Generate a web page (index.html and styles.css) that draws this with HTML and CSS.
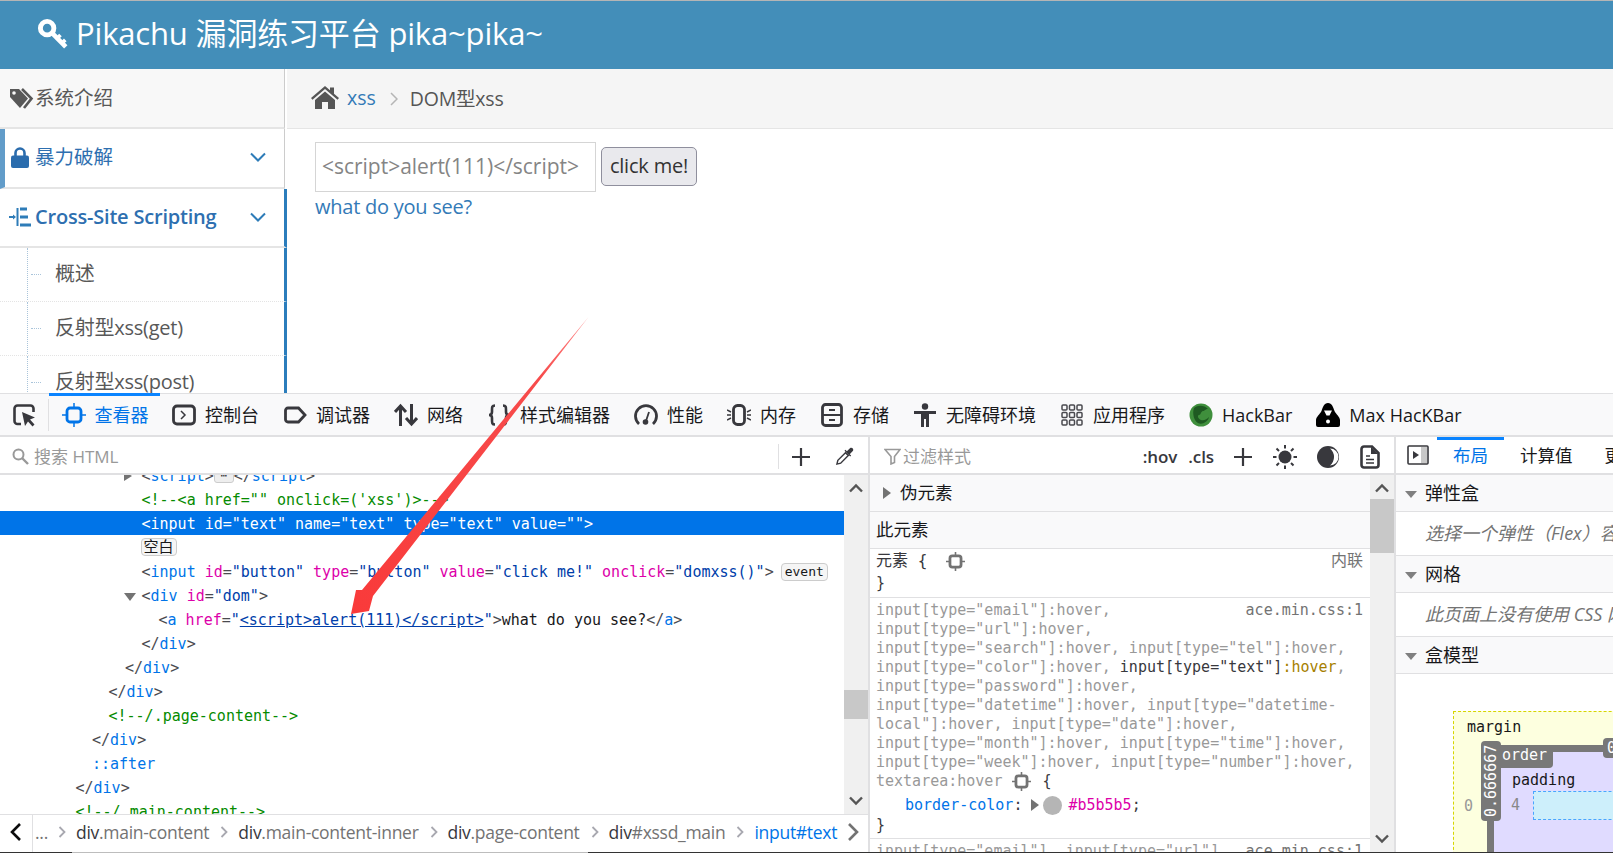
FILE: index.html
```html
<!DOCTYPE html>
<html lang="zh">
<head>
<meta charset="utf-8">
<title>Pikachu</title>
<link rel="stylesheet" href="styles.css">
</head>
<body>
<div class="page">
  <div class="site">
    <header class="navbar">
      <svg class="key" viewBox="0 0 30 30"><circle cx="9.5" cy="9.5" r="6.3" fill="none" stroke="#fff" stroke-width="4.6"/><path d="M14 14l13 13" stroke="#fff" stroke-width="4.4" fill="none"/><path d="M19 19l3-3M23.500 23.500l3-3" stroke="#fff" stroke-width="3.400" fill="none"/></svg>
      <span class="brand">Pikachu 漏洞练习平台 pika~pika~</span>
    </header>
    <div class="site-main">
      <nav class="sidebar">
        <div class="nav-item nav-first">
          <svg class="tags" viewBox="0 0 25 21"><path d="M0 1h9l9 9.500-8 9.500L0 9z" fill="#585858"/><circle cx="4" cy="5" r="1.800" fill="#f8f8f8"/><path d="M12 1l9.500 9.500L14 20" fill="none" stroke="#585858" stroke-width="2.600"/></svg>
          <span class="nav-text grey">系统介绍</span>
        </div>
        <div class="nav-item nav-second">
          <svg class="lock" viewBox="0 0 18 21"><path d="M4.500 9V6a4.500 4.500 0 0 1 9 0v3" fill="none" stroke="#2a6cad" stroke-width="2.600"/><rect x="0" y="8.500" width="18" height="12.500" rx="2" fill="#2a6cad"/></svg>
          <span class="nav-text blue">暴力破解</span>
          <svg class="chev" viewBox="0 0 16 10"><path d="M1 1.500l7 7 7-7" fill="none" stroke="#2e7cb8" stroke-width="2"/></svg>
        </div>
        <div class="nav-item nav-third">
          <svg class="tree" viewBox="0 0 22 20"><path d="M0 10h5" stroke="#2e7cb8" stroke-width="2"/><path d="M4 7.500l3 2.500-3 2.500z" fill="#2e7cb8"/><path d="M8.500 1v18" stroke="#2e7cb8" stroke-width="2"/><path d="M11 2h7M11 10h8M11 18h11" stroke="#2e7cb8" stroke-width="3"/></svg>
          <span class="nav-text blue tight">Cross-Site Scripting</span>
          <svg class="chev" viewBox="0 0 16 10"><path d="M1 1.500l7 7 7-7" fill="none" stroke="#2e7cb8" stroke-width="2"/></svg>
        </div>
        <div class="sub-item"><div class="sub-inner"><span class="dash"></span><span class="sub-text">概述</span></div></div>
        <div class="sub-item"><div class="sub-inner"><span class="dash"></span><span class="sub-text">反射型xss(get)</span></div></div>
        <div class="sub-item"><div class="sub-inner"><span class="dash"></span><span class="sub-text">反射型xss(post)</span></div></div>
      </nav>
      <main class="content">
        <div class="crumbs">
          <svg class="home" viewBox="0 0 28 23"><path d="M0 12L14 0l5 4.300V1.500h4v6.300L28 12l-1.500 1.700L14 3 1.500 13.700z" fill="#555"/><path d="M4 14L14 5.500 24 14v9h-7v-7h-6v7H4z" fill="#555"/></svg>
          <span class="crumb-link">xss</span>
          <svg class="crumb-sep" viewBox="0 0 8 14"><path d="M1 1l6 6-6 6" fill="none" stroke="#b5b5b5" stroke-width="1.500"/></svg>
          <span class="crumb-now">DOM型xss</span>
        </div>
        <div class="page-body">
          <div class="form-row">
            <div class="fake-input">&lt;script&gt;alert(111)&lt;/script&gt;</div>
            <div class="fake-button">click me!</div>
          </div>
          <div class="see">what do you see?</div>
        </div>
      </main>
    </div>
  </div>

  <section class="devtools">
    <div class="toolbar">
      <div class="picker">
        <svg class="ti" viewBox="0 0 24 24"><path d="M9 21H5.500A3 3 0 0 1 2.500 18V5.500a3 3 0 0 1 3-3h13a3 3 0 0 1 3 3V9" fill="none" stroke="#38383d" stroke-width="2.600"/><path d="M10 9l13 5.500-5 2 4.500 5-2 2-4.500-5-3 4.500z" fill="#38383d"/></svg>
      </div>
      <div class="tab tab-active">
        <svg class="ti" viewBox="0 0 24 24"><rect x="5" y="5" width="14" height="14" rx="3" fill="none" stroke="#0074e8" stroke-width="2.800"/><path d="M12 0v5M12 19v5M0 12h5M19 12h5" stroke="#0074e8" stroke-width="1.500"/></svg>
        <span>查看器</span>
      </div>
      <div class="tab">
        <svg class="ti" viewBox="0 0 24 24"><rect x="1.500" y="3" width="21" height="18" rx="3.500" fill="none" stroke="#38383d" stroke-width="2.800"/><path d="M9 8l4 4-4 4" fill="none" stroke="#38383d" stroke-width="1.500"/></svg>
        <span>控制台</span>
      </div>
      <div class="tab">
        <svg class="ti" viewBox="0 0 24 24"><path d="M5 5h10.500l6.500 7-6.500 7H5a2.500 2.500 0 0 1-2.500-2.500v-9A2.500 2.500 0 0 1 5 5z" fill="none" stroke="#38383d" stroke-width="2.800"/></svg>
        <span>调试器</span>
      </div>
      <div class="tab">
        <svg class="ti" viewBox="0 0 24 24"><path d="M6.500 23V3M1 9l5.500-6L12 9M17.500 1v20M12 15l5.500 6 5.500-6" fill="none" stroke="#38383d" stroke-width="3"/></svg>
        <span>网络</span>
      </div>
      <div class="tab">
        <svg class="ti" viewBox="0 0 24 24"><path d="M8 2.500C5 2.500 5 4 5 7v2c0 2-1 3-3 3 2 0 3 1 3 3v2c0 3 0 4.500 3 4.500M16 2.500c3 0 3 1.500 3 4.500v2c0 2 1 3 3 3-2 0-3 1-3 3v2c0 3 0 4.500-3 4.500" fill="none" stroke="#38383d" stroke-width="2.600"/></svg>
        <span>样式编辑器</span>
      </div>
      <div class="tab">
        <svg class="ti" viewBox="0 0 24 24"><path d="M5 21A10.500 10.500 0 1 1 19 21" fill="none" stroke="#38383d" stroke-width="2.800"/><circle cx="11.500" cy="19" r="2.800" fill="#38383d"/><path d="M12 18l3-9" stroke="#38383d" stroke-width="1.800"/></svg>
        <span>性能</span>
      </div>
      <div class="tab">
        <svg class="ti" viewBox="0 0 24 24"><rect x="6.500" y="2.500" width="11" height="19" rx="4" fill="none" stroke="#38383d" stroke-width="2.800"/><path d="M0 7l4 2M0 12h4M0 17l4-2M24 7l-4 2M24 12h-4M24 17l-4-2" stroke="#38383d" stroke-width="1.500"/></svg>
        <span>内存</span>
      </div>
      <div class="tab">
        <svg class="ti" viewBox="0 0 24 24"><rect x="2.500" y="1.500" width="19" height="21" rx="3" fill="none" stroke="#38383d" stroke-width="2.800"/><path d="M3 12h18M9 7h6M9 17h6" stroke="#38383d" stroke-width="1.800"/></svg>
        <span>存储</span>
      </div>
      <div class="tab">
        <svg class="ti" viewBox="0 0 24 24"><circle cx="12" cy="3.500" r="3.200" fill="#38383d"/><path d="M1 8h22v3h-7v13h-3v-8h-2v8H8V11H1z" fill="#38383d"/></svg>
        <span>无障碍环境</span>
      </div>
      <div class="tab">
        <svg class="ti" viewBox="0 0 24 24" fill="none" stroke="#4a4a4f" stroke-width="1.500"><rect x="2" y="2" width="5" height="5" rx="1"/><rect x="9.500" y="2" width="5" height="5" rx="1"/><rect x="17" y="2" width="5" height="5" rx="1"/><rect x="2" y="9.500" width="5" height="5" rx="1"/><rect x="9.500" y="9.500" width="5" height="5" rx="1"/><rect x="17" y="9.500" width="5" height="5" rx="1"/><rect x="2" y="17" width="5" height="5" rx="1"/><rect x="9.500" y="17" width="5" height="5" rx="1"/><rect x="17" y="17" width="5" height="5" rx="1"/></svg>
        <span>应用程序</span>
      </div>
      <div class="tab">
        <svg class="ti" viewBox="0 0 24 24"><circle cx="12" cy="12" r="11.500" fill="#3f8f3c"/><path d="M5 5c4-3 10-3 14 1-3 0-3 2-5 2s-2 4-4 4-1 4 2 5 6-1 8-3c-1 5-7 8-11 6C5 18 3 10 5 5z" fill="#1f5a22"/></svg>
        <span>HackBar</span>
      </div>
      <div class="tab">
        <svg class="ti" viewBox="0 0 24 24"><path d="M12 0C8 0 7 4 5.500 8 4 11 0 14 0 17v5a2 2 0 0 0 2 2h20a2 2 0 0 0 2-2v-5c0-3-4-6-5.500-9C17 4 16 0 12 0z" fill="#000"/><path d="M8 7.500h8l-2.500 5h-3z" fill="#fff"/><circle cx="12" cy="18.500" r="2" fill="#fff"/></svg>
        <span>Max HacKBar</span>
      </div>
    </div>

    <div class="panes">
      <div class="pane pane-markup">
        <div class="bar">
          <svg class="bi-search" viewBox="0 0 17 17"><circle cx="6.500" cy="6.500" r="5" fill="none" stroke="#999" stroke-width="2"/><path d="M10 10l6 6" stroke="#999" stroke-width="2.400"/></svg>
          <span class="placeholder">搜索 HTML</span>
          <span class="bar-fill"></span>
          <span class="vsep"></span>
          <svg class="bi-plus" viewBox="0 0 20 20"><path d="M10 1v18M1 10h18" stroke="#38383d" stroke-width="2.200"/></svg>
          <svg class="bi-drop" viewBox="0 0 20 20"><path d="M2 18l1-4L11 6l3 3-8 8z" fill="#fff" stroke="#38383d" stroke-width="1.500"/><path d="M10 4l6 6 1-1-1.500-1.500L19 4c1-2-1-4-3-3l-3.500 3.500L11 3z" fill="#38383d"/></svg>
        </div>
        <div class="pane-body">
          <div class="tree-view">
            <div class="ln l0 clip-top"><i class="tw tw-right"></i><b class="pn">&lt;</b><b class="tg">script</b><b class="pn">&gt;</b><em class="mini">⋯</em><b class="pn">&lt;/</b><b class="tg">script</b><b class="pn">&gt;</b></div>
            <div class="ln l0 cm">&lt;!--&lt;a href="" onclick=('xss')&gt;--&gt;</div>
            <div class="ln l0 sel">&lt;input id="text" name="text" type="text" value=""&gt;</div>
            <div class="ln l0"><em class="blank">空白</em></div>
            <div class="ln l0"><b class="pn">&lt;</b><b class="tg">input</b> <b class="at">id</b><b class="pn">=</b><b class="vl">"button"</b> <b class="at">type</b><b class="pn">=</b><b class="vl">"button"</b> <b class="at">value</b><b class="pn">=</b><b class="vl">"click me!"</b> <b class="at">onclick</b><b class="pn">=</b><b class="vl">"domxss()"</b><b class="pn">&gt;</b><em class="event">event</em></div>
            <div class="ln l0"><i class="tw tw-down"></i><b class="pn">&lt;</b><b class="tg">div</b> <b class="at">id</b><b class="pn">=</b><b class="vl">"dom"</b><b class="pn">&gt;</b></div>
            <div class="ln lx"><b class="pn">&lt;</b><b class="tg">a</b> <b class="at">href</b><b class="pn">=</b><b class="vl">"</b><u class="lk">&lt;script&gt;alert(111)&lt;/script&gt;</u><b class="vl">"</b><b class="pn">&gt;</b><b class="tx">what do you see?</b><b class="pn">&lt;/</b><b class="tg">a</b><b class="pn">&gt;</b></div>
            <div class="ln l0"><b class="pn">&lt;/</b><b class="tg">div</b><b class="pn">&gt;</b></div>
            <div class="ln l1"><b class="pn">&lt;/</b><b class="tg">div</b><b class="pn">&gt;</b></div>
            <div class="ln l2"><b class="pn">&lt;/</b><b class="tg">div</b><b class="pn">&gt;</b></div>
            <div class="ln l2 cm">&lt;!--/.page-content--&gt;</div>
            <div class="ln l3"><b class="pn">&lt;/</b><b class="tg">div</b><b class="pn">&gt;</b></div>
            <div class="ln l3"><b class="tg">::after</b></div>
            <div class="ln l4"><b class="pn">&lt;/</b><b class="tg">div</b><b class="pn">&gt;</b></div>
            <div class="ln l4 cm">&lt;!--/.main-content--&gt;</div>
          </div>
          <div class="sbar">
            <svg class="sb-arrow" viewBox="0 0 14 10"><path d="M1 8.500l6-6 6 6" fill="none" stroke="#555" stroke-width="2.400"/></svg>
            <div class="thumb thumb-markup"></div>
            <svg class="sb-arrow sb-end" viewBox="0 0 14 10"><path d="M1 1.500l6 6 6-6" fill="none" stroke="#555" stroke-width="2.400"/></svg>
          </div>
        </div>
        <div class="breadcrumbs">
          <svg class="bc-arrow" viewBox="0 0 13 20"><path d="M11 2L3 10l8 8" fill="none" stroke="#0c0c0d" stroke-width="2.600"/></svg>
          <span class="bc-sep"></span>
          <span class="bc-grey bc-dots">...</span>
          <svg class="bc-chev" viewBox="0 0 8 12"><path d="M1.500 1l5 5-5 5" fill="none" stroke="#a8a8b0" stroke-width="1.800"/></svg>
          <span class="bc-item">div<span class="bc-grey">.main-content</span></span>
          <svg class="bc-chev" viewBox="0 0 8 12"><path d="M1.500 1l5 5-5 5" fill="none" stroke="#a8a8b0" stroke-width="1.800"/></svg>
          <span class="bc-item">div<span class="bc-grey">.main-content-inner</span></span>
          <svg class="bc-chev" viewBox="0 0 8 12"><path d="M1.500 1l5 5-5 5" fill="none" stroke="#a8a8b0" stroke-width="1.800"/></svg>
          <span class="bc-item">div<span class="bc-grey">.page-content</span></span>
          <svg class="bc-chev" viewBox="0 0 8 12"><path d="M1.500 1l5 5-5 5" fill="none" stroke="#a8a8b0" stroke-width="1.800"/></svg>
          <span class="bc-item">div<span class="bc-grey">#xssd_main</span></span>
          <svg class="bc-chev" viewBox="0 0 8 12"><path d="M1.500 1l5 5-5 5" fill="none" stroke="#a8a8b0" stroke-width="1.800"/></svg>
          <span class="bc-item bc-current">input#text</span>
          <svg class="bc-arrow bc-next" viewBox="0 0 13 20"><path d="M2 2l8 8-8 8" fill="none" stroke="#737373" stroke-width="2.600"/></svg>
        </div>
      </div>

      <div class="pane pane-rules">
        <div class="bar">
          <svg class="bi-filter" viewBox="0 0 17 17"><path d="M1 1.500h15l-5.500 7v6L7 16V8.500z" fill="none" stroke="#999" stroke-width="1.600"/></svg>
          <span class="placeholder">过滤样式</span>
          <span class="bar-fill"></span>
          <span class="bar-btn">:hov</span>
          <span class="bar-btn bar-cls">.cls</span>
          <svg class="bi-plus2" viewBox="0 0 20 20"><path d="M10 1v18M1 10h18" stroke="#38383d" stroke-width="2.200"/></svg>
          <svg class="bi-sun" viewBox="0 0 24 24"><circle cx="12" cy="12" r="6.500" fill="#38383d"/><path d="M12 0v3.500M12 20.500V24M0 12h3.500M20.500 12H24M3.500 3.500L6 6M18 18l2.500 2.500M20.500 3.500L18 6M6 18l-2.500 2.500" stroke="#38383d" stroke-width="2"/></svg>
          <svg class="bi-moon" viewBox="0 0 22 22"><circle cx="11" cy="11" r="11" fill="#38383d"/><path d="M13 2.500A8.500 8.500 0 0 1 13 19.500 11 11 0 0 0 13 2.500z" fill="#fff"/></svg>
          <svg class="bi-doc" viewBox="0 0 20 24"><path d="M4 1.500h8l6.500 6.500v12a2.500 2.500 0 0 1-2.500 2.500H4A2.500 2.500 0 0 1 1.500 20V4A2.500 2.500 0 0 1 4 1.500z" fill="none" stroke="#38383d" stroke-width="2.600"/><path d="M6 11h4M6 14.500h8M6 18h8" stroke="#38383d" stroke-width="1.500"/><path d="M11 2v7h7" fill="#38383d"/></svg>
        </div>
        <div class="pane-body">
          <div class="rules">
            <div class="rule-head rh-pseudo"><i class="tw tw-rt"></i>伪元素</div>
            <div class="rule-head rh-this">此元素</div>
            <div class="rule rule-el">
              <div class="code-line"><span class="dark el-name">元素 {</span><svg class="gear gear-a" viewBox="0 0 24 24"><rect x="5" y="5" width="14" height="14" rx="3" fill="none" stroke="#737373" stroke-width="3.500"/><path d="M12 0v5M12 19v5M0 12h5M19 12h5" stroke="#737373" stroke-width="2"/></svg><span class="src el-name">内联</span></div>
              <div class="code-line dark">}</div>
            </div>
            <div class="rule">
              <div class="code-line">input[type="email"]:hover,<span class="src">ace.min.css:1</span></div>
              <div class="code-line">input[type="url"]:hover,</div>
              <div class="code-line">input[type="search"]:hover, input[type="tel"]:hover,</div>
              <div class="code-line">input[type="color"]:hover, <span class="dark">input[type="text"]</span><span class="hover">:hover</span>,</div>
              <div class="code-line">input[type="password"]:hover,</div>
              <div class="code-line">input[type="datetime"]:hover, input[type="datetime-</div>
              <div class="code-line">local"]:hover, input[type="date"]:hover,</div>
              <div class="code-line">input[type="month"]:hover, input[type="time"]:hover,</div>
              <div class="code-line">input[type="week"]:hover, input[type="number"]:hover,</div>
              <div class="code-line">textarea:hover<svg class="gear gear-b" viewBox="0 0 24 24"><rect x="5" y="5" width="14" height="14" rx="3" fill="none" stroke="#737373" stroke-width="3.500"/><path d="M12 0v5M12 19v5M0 12h5M19 12h5" stroke="#737373" stroke-width="2"/></svg><span class="dark">{</span></div>
              <div class="decl"><span class="prop">border-color</span><span class="dark">:</span><i class="tw tw-rt2"></i><i class="swatch"></i><span class="val">#b5b5b5</span><span class="dark">;</span></div>
              <div class="code-line dark">}</div>
            </div>
            <div class="rule">
              <div class="code-line">input[type="email"], input[type="url"],<span class="src">ace.min.css:1</span></div>
            </div>
          </div>
          <div class="sbar">
            <svg class="sb-arrow" viewBox="0 0 14 10"><path d="M1 8.500l6-6 6 6" fill="none" stroke="#555" stroke-width="2.400"/></svg>
            <div class="thumb thumb-rules"></div>
            <svg class="sb-arrow sb-end" viewBox="0 0 14 10"><path d="M1 1.500l6 6 6-6" fill="none" stroke="#555" stroke-width="2.400"/></svg>
          </div>
        </div>
      </div>

      <div class="pane pane-layout">
        <div class="bar bar-layout">
          <svg class="bi-side" viewBox="0 0 22 20"><rect x="1" y="1" width="20" height="18" rx="1" fill="#fff" stroke="#38383d" stroke-width="1.600"/><rect x="14" y="2" width="6" height="16" fill="#c8c8c8"/><path d="M6 6l6 4-6 4z" fill="#38383d"/></svg>
          <span class="ltab ltab-active">布局</span>
          <span class="ltab">计算值</span>
          <span class="ltab">更改</span>
        </div>
        <div class="layout-body">
          <div class="lh"><i class="tw tw-dn"></i>弹性盒</div>
          <div class="ld">选择一个弹性（Flex）容器或项目以继续。</div>
          <div class="lh"><i class="tw tw-dn"></i>网格</div>
          <div class="ld">此页面上没有使用 CSS 网格</div>
          <div class="lh"><i class="tw tw-dn"></i>盒模型</div>
          <div class="bm-area">
            <div class="bm-margin">
              <span class="bm-label">margin</span>
              <div class="bm-row">
                <span class="bm-zero">0</span>
                <div class="bm-border">
                  <span class="pill pill-v">0.666667</span>
                  <span class="pill pill-h">order</span>
                  <span class="pill pill-r">0.666667</span>
                  <div class="bm-padding">
                    <span class="bm-label bm-pad">padding</span>
                    <div class="bm-row bm-inner">
                      <span class="bm-four">4</span>
                      <div class="bm-content"></div>
                    </div>
                  </div>
                </div>
              </div>
            </div>
          </div>
        </div>
      </div>
    </div>
    <div class="status-line"></div>
  </section>

  <svg class="annot" viewBox="0 0 1613 853"><polygon points="588.500,317 373,596 369,611 351,614 356,590 362,590" fill="url(#fade)"/><defs><linearGradient id="fade" x1="589" y1="317" x2="352" y2="613" gradientUnits="userSpaceOnUse"><stop offset="0" stop-color="#ff8a8a"/><stop offset=".2" stop-color="#f74c4c"/><stop offset="1" stop-color="#f93a3a"/></linearGradient></defs></svg>
</div>
</body>
</html>
```
FILE: styles.css
```css
* { box-sizing: border-box; }
html, body { margin: 0; padding: 0; height: 853px; overflow: hidden; background: #fff; }
body { font-family: "Open Sans", "Noto Sans CJK SC", sans-serif; color: #333; }
.page { position: relative; width: 1613px; height: 853px; display: flex; flex-direction: column; overflow: hidden; }
b, em, i, u { font-weight: normal; font-style: normal; }

/* site */
.site { height: 393px; display: flex; flex-direction: column; flex: none; overflow: hidden; }
.navbar { height: 69px; flex: none; background: #438eb9; border-top: 1px solid #b5b5b5; display: flex; align-items: center; padding: 0 0 4px 37px; color: #fff; }
.key { width: 32px; height: 32px; margin-right: 7px; margin-top: 2px; }
.brand { font-size: 31px; line-height: 40px; letter-spacing: -.17px; }
.site-main { flex: 1; display: flex; min-height: 0; }
.sidebar { width: 287px; flex: none; display: flex; flex-direction: column; }
.nav-item { height: 60px; flex: none; display: flex; align-items: center; border-right: 1px solid #ccc; border-bottom: 2px solid #e5e5e5; background: #fff; }
.nav-first { height: 60px; background: #f8f8f8; padding-left: 10px; margin-right: 2px; }
.nav-second { border-left: 5px solid #629cc9; padding: 0 0 2px 6px; margin-right: 2px; }
.nav-third { height: 59px; padding: 0 0 2px 9px; border-right: 3px solid #2b7dbc; }
.tags { width: 25px; height: 21px; margin-right: 0; }
.lock { width: 18px; height: 21px; margin-right: 6px; }
.tree { width: 22px; height: 20px; margin-right: 4px; }
.nav-text { font-size: 19.500px; line-height: 28px; flex: 1; }
.grey { color: #585858; }
.blue { color: #2e6fb0; }
.tight { letter-spacing: -.2px; font-size: 20px; font-weight: 600; }
.chev { width: 16px; height: 10px; margin-right: 18px; }
.sub-item { height: 54px; flex: none; display: flex; padding: 0 0 1px 27px; border-bottom: 1px dotted #e4e4e4; border-right: 3px solid #2b7dbc; }
.sub-inner { flex: 1; display: flex; align-items: center; border-left: 1px dotted #a9c4da; }
.dash { width: 10px; margin-left: 3px; border-top: 1px dotted #a9c4da; }
.sub-text { margin-left: 14px; font-size: 20px; line-height: 28px; color: #585858; letter-spacing: -.25px; }
.content { flex: 1; min-width: 0; }
.crumbs { height: 60px; background: #f5f5f5; border-bottom: 1px solid #e5e5e5; display: flex; align-items: center; padding: 0 0 2px 24px; font-size: 19.500px; }
.home { width: 28px; height: 23px; margin-right: 8px; }
.crumb-link { color: #337ab7; }
.crumb-sep { width: 8px; height: 14px; margin: 3px 12px 0 14px; }
.crumb-now { color: #555; letter-spacing: -.2px; }
.page-body { padding: 13px 0 0 28px; }
.form-row { display: flex; align-items: flex-start; }
.fake-input { width: 281px; height: 50px; border: 1px solid #d5d5d5; padding: 0 6px; font-size: 21px; line-height: 46px; color: #858585; letter-spacing: -.02px; white-space: nowrap; }
.fake-button { width: 96px; height: 39px; margin: 5px 0 0 5px; border: 1px solid #8f8f9d; border-radius: 5px; background: #e9e9ed; font-size: 20px; line-height: 35px; text-align: center; color: #333; letter-spacing: -.2px; }
.see { font-size: 20px; line-height: 28px; color: #337ab7; letter-spacing: -.25px; margin-top: 1px; }

/* devtools */
.devtools { flex: 1; min-height: 0; display: flex; flex-direction: column; background: #fff; border-top: 1px solid #e0e0e2; }
.toolbar { height: 43px; flex: none; display: flex; align-items: center; background: #f9f9fa; border-bottom: 2px solid #e0e0e2; font-size: 18px; color: #18181a; }
.picker { width: 49px; height: 32px; flex: none; padding: 4px 0 0 12px; border-right: 1px solid #e0e0e2; }
.tab { height: 43px; display: flex; align-items: center; padding: 0 12px 3px; white-space: nowrap; line-height: 24px; flex: none; border-top: 3px solid transparent; }
.tab-active { color: #0074e8; border-top-color: #0a84ff; padding-left: 12.500px; padding-right: 11.500px; }
.ti { width: 24px; height: 24px; flex: none; margin-right: 9px; }
.panes { flex: 1; min-height: 0; display: flex; }
.pane { display: flex; flex-direction: column; min-width: 0; flex: none; }
.pane-markup { width: 870px; border-right: 2px solid #e0e0e2; }
.pane-rules { width: 526px; border-right: 2px solid #e0e0e2; }
.pane-layout { flex: 1; overflow: hidden; }
.bar { height: 38px; flex: none; display: flex; align-items: center; background: #fff; border-bottom: 2px solid #e0e0e2; padding: 3px 0 0 12px; }
.bar-fill { flex: 1; }
.placeholder { font-size: 17px; color: #999; margin-left: 5px; line-height: 24px; }
.bi-search { width: 17px; height: 17px; }
.vsep { width: 1px; height: 25px; background: #e0e0e2; margin-right: 12px; }
.bi-plus { width: 20px; height: 20px; margin-right: 24px; }
.bi-drop { width: 19px; height: 19px; margin-right: 14px; }
.pane-rules .bar { padding-left: 14px; padding-right: 14px; }
.bi-filter { width: 17px; height: 17px; }
.pane-rules .placeholder { margin-left: 2px; }
.bar-btn { font-size: 17px; font-weight: 600; color: #38383d; line-height: 24px; letter-spacing: -.1px; }
.bar-cls { margin-left: 11px; }
.bi-plus2 { width: 20px; height: 20px; margin-left: 19px; }
.bi-sun { width: 24px; height: 24px; margin-left: 20px; }
.bi-moon { width: 22px; height: 22px; margin-left: 20px; }
.bi-doc { width: 20px; height: 24px; margin-left: 21px; }
.bar-layout { padding: 0 0 0 11px; align-items: stretch; }
.bi-side { width: 22px; height: 20px; align-self: center; margin-right: 8px; flex: none; }
.ltab { font-size: 17.500px; padding: 0 16px; line-height: 31px; border-top: 3px solid transparent; color: #18181a; white-space: nowrap; flex: none; }
.ltab-active { color: #0074e8; border-top-color: #0a84ff; }
.pane-body { flex: 1; min-height: 0; display: flex; overflow: hidden; }
.tree-view { flex: 1; min-width: 0; overflow: hidden; font-family: "DejaVu Sans Mono", "Noto Sans CJK SC", monospace; font-size: 15px; color: #737373; margin-top: 0; }
.ln { height: 24px; line-height: 26px; white-space: pre; }
.clip-top { margin-top: -12px; }
.l0 { padding-left: 141.500px; }
.lx { padding-left: 158.500px; }
.l1 { padding-left: 125px; }
.l2 { padding-left: 108.500px; }
.l3 { padding-left: 92px; }
.l4 { padding-left: 75.500px; }
.tg { color: #0074e8; }
.at { color: #dd00a9; }
.vl { color: #003eaa; }
.pn { color: #4a4a4f; }
.tx { color: #18181a; }
.cm { color: #058b00; }
.lk { color: #003eaa; text-decoration: underline; }
.sel { background: #0074e8; color: #fff; }
.blank { display: inline-block; height: 18px; line-height: 16px; border: 1px solid #ccc; border-radius: 4px; background: #f5f5f5; font-size: 15px; padding: 0 2px; color: #18181a; vertical-align: 1px; margin-left: -1px; }
.event { display: inline-block; height: 18px; line-height: 16px; border: 1px solid #ccc; border-radius: 4px; background: #f5f5f5; font-size: 13px; padding: 0 3px; color: #18181a; margin-left: 7px; vertical-align: 1px; }
.mini { display: inline-block; width: 20px; height: 12px; line-height: 8px; border: 1px solid #ccc; border-radius: 3px; background: #eee; font-size: 11px; text-align: center; color: #333; vertical-align: 2px; }
.tw { display: inline-block; width: 0; height: 0; border-style: solid; border-color: transparent; }
.tw-right { border-width: 5px 0 5px 8px; border-left-color: #737373; margin-left: -18px; margin-right: 10px; }
.tw-down { border-width: 8px 6px 0; border-top-color: #737373; margin-left: -18px; margin-right: 6px; vertical-align: middle; }
.tw-rt { border-width: 6px 0 6px 8px; border-left-color: #737373; margin-right: 9px; }
.tw-rt2 { border-width: 6px 0 6px 8px; border-left-color: #737373; margin: 0 4px 0 9px; }
.tw-dn { border-width: 7px 6px 0; border-top-color: #808080; margin-right: 8px; vertical-align: 2px; }
.sbar { width: 24px; flex: none; background: #f0f0f0; display: flex; flex-direction: column; align-items: center; padding: 8px 0 8px; }
.sb-arrow { width: 14px; height: 10px; flex: none; }
.sb-end { margin-top: auto; }
.thumb { width: 24px; background: #c8c8c8; flex: none; }
.thumb-markup { height: 29px; margin-top: 197px; }
.thumb-rules { height: 54px; margin-top: 6px; }
.pane-markup .sbar { height: 339px; }
.pane-markup .pane-body { flex: none; height: 339px; }
.breadcrumbs { flex: 1; min-height: 0; display: flex; align-items: center; border-top: 1px solid #e0e0e2; padding: 0 0 4px 9px; font-size: 17.500px; color: #38383d; letter-spacing: -.28px; white-space: nowrap; }
.bc-arrow { width: 13px; height: 20px; flex: none; }
.bc-sep { width: 1px; align-self: stretch; margin: 0 2px -4px 10px; background: #e0e0e2; }
.bc-grey { color: #737373; }
.bc-chev { width: 8px; height: 12px; margin: 0 10px 0 11px; flex: none; }
.bc-dots + .bc-chev { margin-left: 10px; margin-right: 10px; }
.bc-current { color: #0074e8; }
.bc-next { margin-left: 10px; }

/* rules */
.rules { flex: 1; min-width: 0; overflow: hidden; font-family: "DejaVu Sans Mono", "Noto Sans CJK SC", monospace; font-size: 15px; color: #999; }
.rule-head { height: 37px; background: #f9f9fa; border-bottom: 1px solid #e0e0e2; font-family: "Open Sans", "Noto Sans CJK SC", sans-serif; font-size: 17.500px; line-height: 35px; color: #18181a; padding-left: 6px; }
.rh-pseudo { padding-left: 13px; }
.rule { border-bottom: 1px solid #e0e0e2; padding: 3px 7px 3px 6px; }
.rule-el { height: 49px; padding-top: 1px; padding-bottom: 0; }
.rule-el .code-line { height: 22px; line-height: 22px; }
.el-name { font-size: 16px; }
.code-line { height: 19px; line-height: 19px; white-space: pre; display: flex; align-items: center; }
.src { margin-left: auto; color: #737373; }
.dark { color: #38383d; }
.hover { color: #a67f00; }
.gear { width: 19px; height: 19px; flex: none; }
.gear-a { margin-left: 19px; }
.gear-b { margin: 0 11px 0 10px; }
.decl { height: 25px; padding: 3px 0 0 29px; display: flex; align-items: center; color: #38383d; white-space: pre; }
.prop { color: #0074e8; }
.val { color: #dd00a9; }
.swatch { width: 19px; height: 19px; border-radius: 50%; background: #b5b5b5; margin-right: 6px; flex: none; }

/* layout */
.layout-body { flex: 1; min-height: 0; overflow: hidden; }
.lh { height: 37px; background: #f9f9fa; border-bottom: 1px solid #e0e0e2; font-size: 18px; line-height: 36px; color: #18181a; padding-left: 9px; white-space: nowrap; }
.ld { height: 44px; border-bottom: 1px solid #e0e0e2; padding-left: 29px; font-size: 18px; line-height: 42px; font-style: italic; color: #737373; white-space: nowrap; }
.bm-area { padding: 37px 0 0 57px; width: 700px; }
.bm-margin { width: 500px; height: 300px; background: #fdffdf; border: 1px dashed #d6d600; padding: 6px 0 0 13px; font-family: "DejaVu Sans Mono", monospace; font-size: 15px; color: #18181a; }
.bm-label { display: block; line-height: 18px; height: 18px; }
.bm-row { display: flex; }
.bm-zero { width: 23px; flex: none; margin-top: 60px; margin-left: -3px; line-height: 20px; color: #999; padding-left: 0; }
.bm-border { position: relative; margin-top: 9px; width: 400px; height: 260px; flex: none; border: 7px solid #787878; background: #e0dbff; }
.bm-padding { padding: 18px 0 0 18px; }
.bm-pad { height: 20px; line-height: 20px; margin-left: 0; }
.bm-inner { margin-top: 1px; }
.bm-four { width: 22px; flex: none; margin-left: -1px; line-height: 28px; color: #888; }
.bm-content { width: 300px; height: 29px; flex: none; border: 1px dashed #4aa4ff; background: #cdeffb; }
.pill { position: absolute; background: #787878; color: #fff; border-radius: 4px; font-size: 15px; line-height: 20px; white-space: nowrap; }
.pill-v { left: -13px; top: -11px; width: 20px; height: 80px; writing-mode: vertical-rl; transform: rotate(180deg); text-align: center; }
.pill-h { left: 7px; top: -7px; height: 23px; padding: 0 6px 0 1px; border-radius: 0 0 4px 0; line-height: 20px; }
.pill-r { left: 109px; top: -14px; height: 20px; padding: 0 4px; }

.status-line { height: 1px; flex: none; background: linear-gradient(to right, #333 72px, #bdbdbd 72px, #bdbdbd 588px, #333 588px); }
.annot { position: absolute; left: 0; top: 0; width: 1613px; height: 853px; pointer-events: none; }
```
